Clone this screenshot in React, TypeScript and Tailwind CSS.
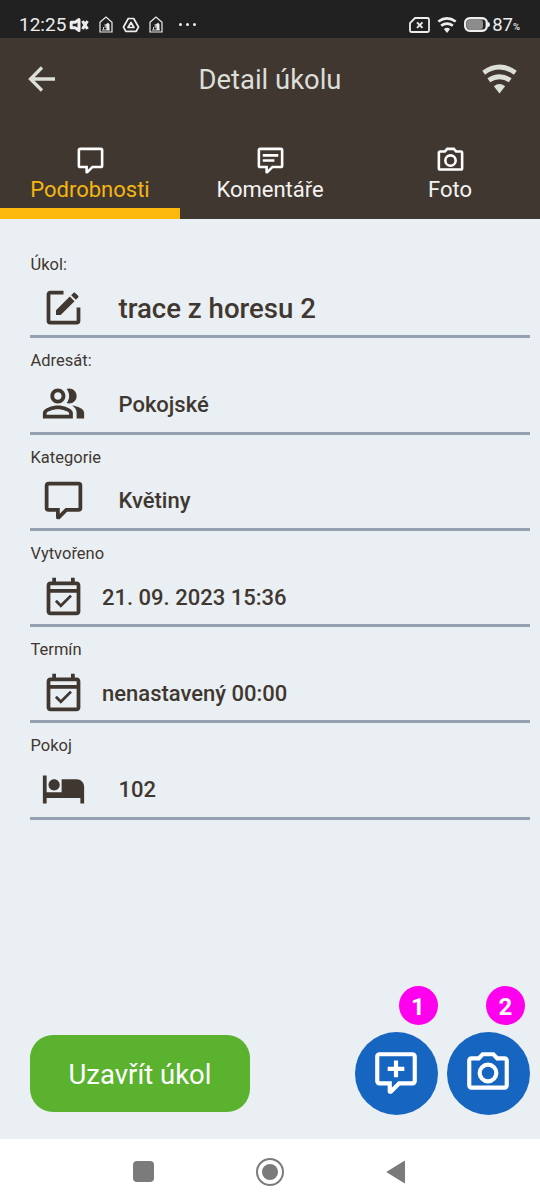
import type { ReactNode } from "react";

const icons = {
  comment:
    "M9,22A1,1 0 0,1 8,21V18H4A2,2 0 0,1 2,16V4C2,2.89 2.9,2 4,2H20A2,2 0 0,1 22,4V16A2,2 0 0,1 20,18H13.9L10.2,21.71C10,21.9 9.75,22 9.5,22V22H9M10,16V19.08L13.08,16H20V4H4V16H10Z",
  commentLines: "M6,7H18V9H6V7M6,11H15V13H6V11Z",
  commentPlus: "M11,6H13V9H16V11H13V14H11V11H8V9H11V6Z",
  camera:
    "M20,4H16.83L15,2H9L7.17,4H4A2,2 0 0,0 2,6V18A2,2 0 0,0 4,20H20A2,2 0 0,0 22,18V6A2,2 0 0,0 20,4M20,18H4V6H8.05L9.88,4H14.12L15.95,6H20V18M12,7A5,5 0 0,0 7,12A5,5 0 0,0 12,17A5,5 0 0,0 17,12A5,5 0 0,0 12,7M12,15A3,3 0 0,1 9,12A3,3 0 0,1 12,9A3,3 0 0,1 15,12A3,3 0 0,1 12,15Z",
  edit: "M5,3C3.89,3 3,3.89 3,5V19A2,2 0 0,0 5,21H19A2,2 0 0,0 21,19V12H19V19H5V5H12V3H5M17.78,4C17.61,4 17.43,4.07 17.3,4.2L16.08,5.41L18.58,7.91L19.8,6.7C20.06,6.44 20.06,6 19.8,5.75L18.25,4.2C18.12,4.07 17.95,4 17.78,4M15.37,6.12L8,13.5V16H10.5L17.87,8.62L15.37,6.12Z",
  people:
    "M15 12c2.21 0 4-1.79 4-4s-1.79-4-4-4c-.47 0-.91.1-1.33.24C14.5 5.27 15 6.58 15 8s-.5 2.73-1.33 3.76c.42.14.86.24 1.33.24zM16.67 13.13C18.04 14.06 19 15.32 19 17v3h4v-3c0-2.18-3.57-3.47-6.33-3.87zM9 12c2.21 0 4-1.79 4-4s-1.79-4-4-4-4 1.79-4 4 1.79 4 4 4zm0-6c1.1 0 2 .9 2 2s-.9 2-2 2-2-.9-2-2 .9-2 2-2zM9 13c-2.67 0-8 1.34-8 4v3h16v-3c0-2.66-5.33-4-8-4zm6 5H3v-.99C3.2 16.29 6.3 15 9 15s5.8 1.29 6 2v1z",
  calendar:
    "M16.53 12.06L15.47 11l-4.88 4.88-2.12-2.12-1.06 1.06L10.59 18l5.94-5.94zM19 4h-1V2h-2v2H8V2H6v2H5c-1.11 0-1.99.9-1.99 2L3 20c0 1.1.89 2 2 2h14c1.1 0 2-.9 2-2V6c0-1.1-.9-2-2-2zm0 16H5V10h14v10zM5 8V6h14v2H5z",
  bed: "M7 13c1.66 0 3-1.34 3-3S8.66 7 7 7s-3 1.34-3 3 1.34 3 3 3zm12-6h-8v7H3V5H1v15h2v-3h18v3h2v-9c0-2.21-1.79-4-4-4z",
};

function Icon({ d, className }: { d: string; className: string }) {
  return (
    <svg viewBox="0 0 24 24" fill="currentColor" fillRule="evenodd" className={className}>
      <path d={d} />
    </svg>
  );
}

function HouseIcon() {
  return (
    <svg viewBox="0 0 14 18" className="h-[18px] w-[14px]" fill="none" stroke="currentColor">
      <path d="M1 6.2 7 1l6 5.2V16H1z" strokeWidth="1.2" />
      <path d="M3 14h8M4.5 13.5v-2.5M6.2 12V8" strokeWidth="0.9" />
      <path d="M7 8.2 9 6.8l1.5 1.4V14H7.6z" fill="currentColor" stroke="none" />
    </svg>
  );
}

function WifiIcon({ className }: { className: string }) {
  return (
    <svg viewBox="0 0 36 30" className={className} fill="none" stroke="currentColor" strokeWidth="5">
      <path d="M1.700 8.500Q18-3 34.300 8.500" />
      <path d="M7 16.300Q18 8.900 29 16.300" />
      <path d="M12.200 22.500Q18 18 23.800 22.500L18 30z" fill="currentColor" stroke="none" />
    </svg>
  );
}

function Tab({ label, d, active }: { label: string; d: string; active?: boolean }) {
  return (
    <div
      className={
        active
          ? "flex flex-1 flex-col items-center border-b-[11px] border-[#fbba0b] text-[#f5b612]"
          : "flex flex-1 flex-col items-center border-b-[11px] border-transparent text-[#f3f3f1]"
      }
    >
      <Icon d={d} className="mt-[25px] size-[31px] shrink-0 text-white" />
      <span className="mt-px text-[22px] leading-[26px]">{label}</span>
    </div>
  );
}

const fields = [
  { label: "Úkol:", value: "trace z horesu 2", icon: icons.edit, text: "mt-[3px] ml-[32.5px] text-[27.6px]" },
  { label: "Adresát:", value: "Pokojské", icon: icons.people, text: "mt-[2px] ml-[32.5px] text-[22px]" },
  { label: "Kategorie", value: "Květiny", icon: icons.comment, text: "mt-[1px] ml-[32.5px] text-[22px]" },
  { label: "Vytvořeno", value: "21. 09. 2023 15:36", icon: icons.calendar, text: "mt-[2px] ml-[16px] text-[22px]" },
  { label: "Termín", value: "nenastavený 00:00", icon: icons.calendar, text: "mt-[2px] ml-[16px] text-[22px]" },
  { label: "Pokoj", value: "102", icon: icons.bed, text: "mt-[2px] ml-[32.5px] text-[22px]" },
];

function Fab({ badge, children }: { badge: string; children: ReactNode }) {
  return (
    <div className="relative flex size-[83px] items-center justify-center rounded-full bg-[#1665c1] text-white">
      {children}
      <span
        className={
          badge === "1"
            ? "absolute -top-[46px] right-0 flex size-[39px] items-center justify-center rounded-full bg-[#ff00ee] pt-[3px] text-[24px] font-bold"
            : "absolute -top-[46px] right-[4.5px] flex size-[39px] items-center justify-center rounded-full bg-[#ff00ee] pt-[3px] text-[24px] font-bold"
        }
      >
        {badge}
      </span>
    </div>
  );
}

export default function App() {
  return (
    <div className="flex h-[1204px] w-[540px] flex-col overflow-hidden bg-[#e9eff2] font-['Roboto',sans-serif] text-[#413731]">
      {/* Status bar */}
      <div className="flex h-[38px] shrink-0 items-center bg-[#212121] pt-[11px] pl-[19px] pr-[20px] text-[#ededed]">
        <span className="text-[19px] leading-[26px]">12:25</span>
        <svg viewBox="0 0 20 16" className="ml-[3px] h-4 w-5" fill="none" stroke="currentColor" strokeWidth="3">
          <path d="M2.200 5.200h4L10 2.500v11L6.200 10.800h-4z" strokeLinejoin="round" />
          <path d="m13.500 4 5 8M18.500 4l-5 8" strokeWidth="3" />
        </svg>
        <div className="ml-[10px] flex items-center gap-[9px]">
          <HouseIcon />
          <svg viewBox="0 0 18 16" className="h-4 w-[18px]" fill="none" stroke="currentColor" strokeLinejoin="round">
            <path d="M6.300 1.500h5.400L16.500 10l-2.300 4.300H3.800L1.500 10z" strokeWidth="1.700" />
            <path d="m9 5.500 3 5H6z" strokeWidth="1.700" />
          </svg>
          <HouseIcon />
        </div>
        <div className="ml-[16px] flex gap-[4px]">
          <i className="size-[3px] rounded-full bg-current" />
          <i className="size-[3px] rounded-full bg-current" />
          <i className="size-[3px] rounded-full bg-current" />
        </div>
        <svg viewBox="0 0 21 16" className="ml-auto h-4 w-[21px]" fill="none" stroke="currentColor" strokeWidth="1.800">
          <path d="M6 1h12.500q1.500 0 1.500 1.500v11q0 1.500-1.500 1.500h-16Q1 15 1 13.500V6z" />
          <path d="m8 5.300 5.500 5.500M13.500 5.300 8 10.800" strokeWidth="1.900" />
        </svg>
        <WifiIcon className="ml-[7px] h-4 w-5" />
        <svg viewBox="0 0 26 15" className="ml-[7px] h-[15px] w-[26px]">
          <rect x="1.200" y="1.200" width="21.600" height="12.600" rx="4.500" fill="none" stroke="currentColor" strokeWidth="2.400" />
          <rect x="3" y="3" width="16" height="9" rx="2" fill="#8c8c8c" />
          <path d="M24 5q2 0 2 2.500T24 10z" fill="currentColor" />
        </svg>
        <span className="ml-[2px] text-[18.5px] leading-[26px]">87</span>
        <span className="mt-[5px] text-[9.5px] font-medium leading-none">%</span>
      </div>

      {/* Header */}
      <header className="flex h-[181px] shrink-0 flex-col bg-[#413731] text-[#dcded8]">
        <div className="flex h-[82px] items-center justify-between pl-[27px] pr-[23px]">
          <svg viewBox="0 0 28 26" className="h-[26px] w-[30px]" fill="none" stroke="currentColor" strokeWidth="3.300">
            <path d="M27 13H3M14 1.500 2.500 13 14 24.500" />
          </svg>
          <h1 className="mt-[4px] ml-[1px] text-[27.4px]">Detail úkolu</h1>
          <WifiIcon className="h-[30px] w-[35px]" />
        </div>
        <nav className="flex flex-1">
          <Tab label="Podrobnosti" d={icons.comment} active />
          <Tab label="Komentáře" d={icons.comment + icons.commentLines} />
          <Tab label="Foto" d={icons.camera} />
        </nav>
      </header>

      {/* Task fields */}
      <main className="flex-1 pt-[23px] pl-[30px] pr-[10px]">
        {fields.map((f) => (
          <div key={f.label} className="flex h-[96.25px] flex-col border-b-[3px] border-[#95a0b0]">
            <p className="mt-[13px] ml-[0.5px] text-[16.5px] leading-[20px]">{f.label}</p>
            <div className="mt-[10px] flex h-[45px] items-center pl-[11px]">
              <Icon d={f.icon} className="size-[45px]" />
              <span className={`${f.text} font-medium`}>{f.value}</span>
            </div>
          </div>
        ))}
      </main>

      {/* Actions */}
      <div className="flex items-center pb-[24.5px] pl-[30px] pr-[10.5px]">
        <button className="h-[77px] w-[220px] rounded-[23px] bg-[#5ab22f] pt-[3px] text-[27.5px] text-white">
          Uzavřít úkol
        </button>
        <div className="ml-auto flex gap-[9px]">
          <Fab badge="1">
            <Icon d={icons.comment + icons.commentPlus} className="size-[50px]" />
          </Fab>
          <Fab badge="2">
            <Icon d={icons.camera} className="size-[50px]" />
          </Fab>
        </div>
      </div>

      {/* Android navigation */}
      <div className="flex h-[65px] shrink-0 items-center justify-center bg-white pr-[2px] text-[#7b7b7b]">
        <div className="size-[21px] rounded-[4px] bg-current" />
        <div className="ml-[102px] flex size-[28px] items-center justify-center rounded-full border-2 border-current">
          <div className="size-[16px] rounded-full bg-current" />
        </div>
        <svg viewBox="0 0 20 24" className="ml-[102px] h-6 w-5" fill="currentColor">
          <path d="M18 1q1-.5 1 .5v21q0 1-1 .5L1 12.500q-.7-.5 0-1z" />
        </svg>
      </div>
    </div>
  );
}
